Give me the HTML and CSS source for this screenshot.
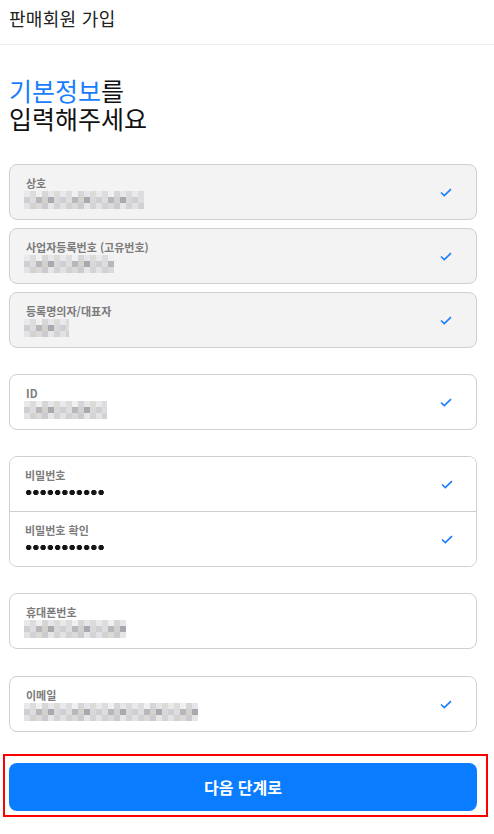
FILE: index.html
```html
<!DOCTYPE html>
<html lang="ko">
<head>
	<meta charset="UTF-8">
	<title>판매회원 가입</title>
	<link rel="stylesheet" href="styles.css">
</head>
<body>
	<header>
		<h1>판매회원 가입</h1>
	</header>
	<section class="content">
		<h2 class="headline">
			<span class="line"><span class="accent">기본정보</span>를</span>
			<span class="line">입력해주세요</span>
		</h2>

		<div class="group">
			<div class="field locked">
				<div class="field-body">
					<label>상호</label>
					<div class="mosaic w120"></div>
				</div>
				<svg class="check" viewBox="0 0 12 9"><path d="M1 4.5 L4.3 7.6 L11 1.2"/></svg>
			</div>
			<div class="field locked">
				<div class="field-body">
					<label>사업자등록번호 (고유번호)</label>
					<div class="mosaic w90"></div>
				</div>
				<svg class="check" viewBox="0 0 12 9"><path d="M1 4.5 L4.3 7.6 L11 1.2"/></svg>
			</div>
			<div class="field locked">
				<div class="field-body">
					<label>등록명의자/대표자</label>
					<div class="mosaic w45"></div>
				</div>
				<svg class="check" viewBox="0 0 12 9"><path d="M1 4.5 L4.3 7.6 L11 1.2"/></svg>
			</div>
		</div>

		<div class="group">
			<div class="field">
				<div class="field-body">
					<label>ID</label>
					<div class="mosaic w83"></div>
				</div>
				<svg class="check" viewBox="0 0 12 9"><path d="M1 4.5 L4.3 7.6 L11 1.2"/></svg>
			</div>
		</div>

		<div class="group">
			<div class="joined">
				<div class="field">
					<div class="field-body">
						<label>비밀번호</label>
						<div class="dots"></div>
					</div>
					<svg class="check" viewBox="0 0 12 9"><path d="M1 4.5 L4.3 7.6 L11 1.2"/></svg>
				</div>
				<div class="field">
					<div class="field-body">
						<label>비밀번호 확인</label>
						<div class="dots"></div>
					</div>
					<svg class="check" viewBox="0 0 12 9"><path d="M1 4.5 L4.3 7.6 L11 1.2"/></svg>
				</div>
			</div>
		</div>

		<div class="group wide">
			<div class="field">
				<div class="field-body">
					<label>휴대폰번호</label>
					<div class="mosaic w102"></div>
				</div>
			</div>
		</div>

		<div class="group">
			<div class="field">
				<div class="field-body">
					<label>이메일</label>
					<div class="mosaic w174"></div>
				</div>
				<svg class="check" viewBox="0 0 12 9"><path d="M1 4.5 L4.3 7.6 L11 1.2"/></svg>
			</div>
		</div>

		<div class="highlight">
			<button class="btn-next">다음 단계로</button>
		</div>
	</section>
</body>
</html>
```
FILE: styles.css
```css
* {
	margin: 0;
	box-sizing: border-box;
}
body {
	font-family: "Noto Sans CJK KR", "Noto Sans", sans-serif;
	color: #111;
	background: #fff;
}
header {
	height: 45px;
	padding: 6px 9px 0;
	border-bottom: 1px solid #eee;
}
header h1 {
	font-size: 18px;
	font-weight: 400;
	line-height: 24px;
	letter-spacing: 0.3px;
	color: #222;
}
.content {
	padding: 31px 17px 0 9px;
}
.headline {
	font-size: 25px;
	font-weight: 400;
	letter-spacing: 0;
	margin-bottom: 32px;
}
.headline .line {
	display: block;
	height: 28px;
	line-height: 28px;
}
.accent {
	color: #1a7dff;
}
.group {
	display: flex;
	flex-direction: column;
	gap: 8px;
	margin-bottom: 26px;
}
.group.wide {
	margin-bottom: 27px;
}
.field {
	height: 56px;
	display: flex;
	align-items: center;
	padding: 0 24px 0 16px;
	border: 1px solid #cfcfcf;
	border-radius: 8px;
	background: #fff;
}
.field.locked {
	background: #f3f3f3;
}
.field-body {
	flex: 1;
	display: flex;
	flex-direction: column;
}
.field-body label {
	font-size: 11px;
	font-weight: 700;
	line-height: 16px;
	color: #7b7b7b;
}
.check {
	width: 12px;
	height: 9px;
	fill: none;
	stroke: #1a7dff;
	stroke-width: 1.6;
}
.joined {
	border: 1px solid #cfcfcf;
	border-radius: 8px;
	overflow: hidden;
}
.joined .field {
	height: 54px;
	border: none;
	border-radius: 0;
	padding-left: 15px;
	padding-right: 23px;
}
.joined .field + .field {
	height: 55px;
	border-top: 1px solid #cfcfcf;
}
.dots {
	width: 80px;
	height: 18px;
	background: radial-gradient(circle, #151515 2.4px, transparent 3px) left center / 7.25px 7px repeat-x;
}
.mosaic {
	height: 18px;
	margin-left: -2px;
	background:
		repeating-linear-gradient(90deg, #e9e9ec 0 6px, #dcdbdd 6px 12px, #f0f0f1 12px 18px, #d6d5d8 18px 24px, #e4e6e9 24px 30px, #dedad7 30px 36px) top / 100% 6px no-repeat,
		repeating-linear-gradient(90deg, #cfced2 0 6px, #dddde0 6px 12px, #b9b7bc 12px 18px, #d3d0cd 18px 24px, #a9a8af 24px 30px, #d8d8da 30px 36px) center / 100% 6px no-repeat,
		repeating-linear-gradient(90deg, #e2e2e4 0 6px, #d2d1d4 6px 12px, #dcdad7 12px 18px, #cbcbcf 18px 24px, #e6e6e7 24px 30px, #d3d3d5 30px 36px) bottom / 100% 6px no-repeat;
}
.w45 { width: 45px; }
.w83 { width: 83px; }
.w90 { width: 90px; }
.w102 { width: 102px; }
.w120 { width: 120px; }
.w174 { width: 174px; }
.highlight {
	margin: -4px -11px 0 -6px;
	padding: 7px 9px 4px 4px;
	border: 2px solid #f00;
}
.btn-next {
	display: block;
	width: 100%;
	height: 48px;
	border: none;
	border-radius: 8px;
	background: #0a7cff;
	color: #fff;
	font-family: inherit;
	font-size: 16px;
	font-weight: 700;
}
```
